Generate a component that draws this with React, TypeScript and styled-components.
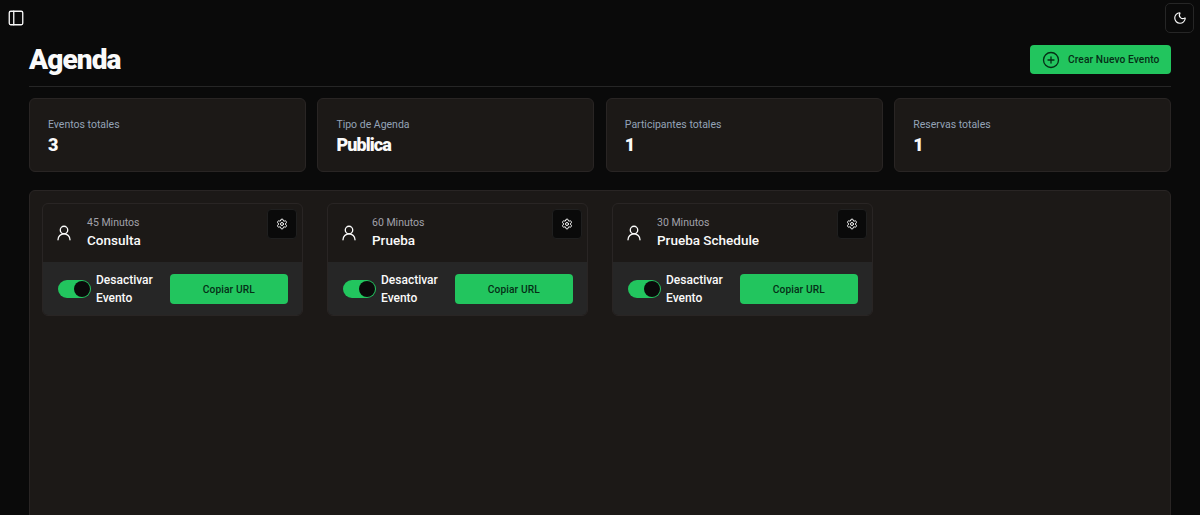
import React from 'react';
import styled, { createGlobalStyle } from 'styled-components';
import { CirclePlus, Moon, PanelLeft, Settings, UserRound } from 'lucide-react';

const GlobalStyle = createGlobalStyle`
  html, body {
    margin: 0;
    height: 100%;
    background: #0a0a0a;
    overflow: hidden;
  }

  * {
    box-sizing: border-box;
  }
`;

const Page = styled.div`
  width: 1200px;
  height: 515px;
  overflow: hidden;
  background: #0a0a0a;
  color: #fafafa;
  font-family: Roboto, "Liberation Sans", sans-serif;
`;

const TopBar = styled.header`
  display: flex;
  align-items: center;
  justify-content: space-between;
  height: 36px;
  padding: 0 6px 0 7px;
`;

const SidebarToggle = styled.button`
  display: flex;
  align-items: center;
  justify-content: center;
  width: 18px;
  height: 18px;
  padding: 0;
  border: 0;
  background: none;
  color: #fafafa;
`;

const ThemeToggle = styled.button`
  display: flex;
  align-items: center;
  justify-content: center;
  width: 29px;
  height: 30px;
  padding: 0;
  border: 1px solid #262626;
  border-radius: 5px;
  background: #0a0a0a;
  color: #fafafa;
`;

const Main = styled.main`
  padding: 0 29px;
`;

const Heading = styled.div`
  display: flex;
  align-items: flex-start;
  justify-content: space-between;
  height: 51px;
  padding-top: 9px;
  border-bottom: 1px solid #262626;
`;

const Title = styled.h1`
  margin: 0;
  font-size: 28px;
  line-height: 30px;
  font-weight: 900;
  letter-spacing: -0.9px;
`;

const CreateButton = styled.button`
  display: flex;
  align-items: center;
  gap: 8px;
  flex: none;
  width: 141px;
  height: 29px;
  padding: 0 0 0 12px;
  border: 0;
  border-radius: 4px;
  background: #22c55e;
  color: #052e16;
  font: 500 10.2px Roboto, sans-serif;
  letter-spacing: 0.1px;
  white-space: nowrap;
`;

const Stats = styled.section`
  display: grid;
  grid-template-columns: repeat(4, 1fr);
  gap: 11.67px;
  margin-top: 11px;
`;

const StatCard = styled.div`
  height: 74px;
  padding: 19px 18px 0;
  background: #1c1917;
  border: 1px solid #292524;
  border-radius: 6px;
`;

const StatLabel = styled.div`
  font-size: 10.5px;
  line-height: 13px;
  color: #94a3b8;
`;

const StatValue = styled.div`
  margin-top: 3px;
  font-size: 18px;
  line-height: 21px;
  font-weight: 900;
  letter-spacing: -0.9px;
`;

const Panel = styled.section`
  display: flex;
  gap: 24px;
  height: 400px;
  margin-top: 18px;
  padding: 12px;
  background: #1c1917;
  border: 1px solid #292524;
  border-radius: 6px;
`;

const EventCard = styled.article`
  width: 261px;
  height: 113px;
  overflow: hidden;
  border: 1px solid #292524;
  border-radius: 6px;
`;

const CardTop = styled.div`
  position: relative;
  display: flex;
  align-items: center;
  gap: 14px;
  height: 58px;
  padding: 0 0 0 12px;
`;

const PersonIcon = styled(UserRound)`
  flex: none;
  color: #fafafa;
`;

const CardInfo = styled.div`
  display: flex;
  flex-direction: column;
  padding-bottom: 2px;
`;

const Duration = styled.span`
  font-size: 10.5px;
  line-height: 13px;
  color: #a1a1aa;
`;

const EventName = styled.span`
  margin-top: 3px;
  font-size: 13.5px;
  line-height: 17px;
  font-weight: 500;
`;

const SettingsButton = styled.button`
  position: absolute;
  top: 5px;
  right: 5px;
  display: flex;
  align-items: center;
  justify-content: center;
  width: 30px;
  height: 30px;
  padding: 0;
  border: 1px solid #1f1f1f;
  border-radius: 4px;
  background: #0a0a0a;
  color: #fafafa;
`;

const CardBottom = styled.div`
  display: flex;
  align-items: center;
  height: 54px;
  padding: 0 14px 0 15px;
  background: #262626;
`;

const Toggle = styled.span`
  display: flex;
  align-items: center;
  justify-content: flex-end;
  flex: none;
  width: 33px;
  height: 18px;
  padding: 1px;
  border-radius: 9px;
  background: #22c55e;
`;

const ToggleThumb = styled.span`
  width: 16px;
  height: 16px;
  border-radius: 50%;
  background: #0a0a0a;
`;

const ToggleLabel = styled.span`
  width: 74px;
  margin-left: 5px;
  font-size: 12px;
  line-height: 18px;
  font-weight: 500;
`;

const CopyButton = styled.button`
  width: 119px;
  height: 30px;
  padding: 0;
  border: 0;
  border-radius: 4px;
  background: #22c55e;
  color: #052e16;
  font: 500 10.2px Roboto, sans-serif;
  letter-spacing: 0.1px;
`;

const stats = [
  { label: 'Eventos totales', value: '3' },
  { label: 'Tipo de Agenda', value: 'Publica' },
  { label: 'Participantes totales', value: '1' },
  { label: 'Reservas totales', value: '1' }
];

const events = [
  { duration: '45 Minutos', name: 'Consulta' },
  { duration: '60 Minutos', name: 'Prueba' },
  { duration: '30 Minutos', name: 'Prueba Schedule' }
];

export default function App (): React.ReactElement {
  return (
    <Page>
      <GlobalStyle />
      <TopBar>
        <SidebarToggle aria-label='Sidebar'>
          <PanelLeft size={18} strokeWidth={1.75} />
        </SidebarToggle>
        <ThemeToggle aria-label='Tema'>
          <Moon size={14} />
        </ThemeToggle>
      </TopBar>
      <Main>
        <Heading>
          <Title>Agenda</Title>
          <CreateButton>
            <CirclePlus size={18} strokeWidth={1.75} />
            Crear Nuevo Evento
          </CreateButton>
        </Heading>
        <Stats>
          {stats.map(({ label, value }) => (
            <StatCard key={label}>
              <StatLabel>{label}</StatLabel>
              <StatValue>{value}</StatValue>
            </StatCard>
          ))}
        </Stats>
        <Panel>
          {events.map(({ duration, name }) => (
            <EventCard key={name}>
              <CardTop>
                <PersonIcon size={18} strokeWidth={1.75} />
                <CardInfo>
                  <Duration>{duration}</Duration>
                  <EventName>{name}</EventName>
                </CardInfo>
                <SettingsButton aria-label='Ajustes'>
                  <Settings size={12} />
                </SettingsButton>
              </CardTop>
              <CardBottom>
                <Toggle><ToggleThumb /></Toggle>
                <ToggleLabel>Desactivar Evento</ToggleLabel>
                <CopyButton>Copiar URL</CopyButton>
              </CardBottom>
            </EventCard>
          ))}
        </Panel>
      </Main>
    </Page>
  );
}
